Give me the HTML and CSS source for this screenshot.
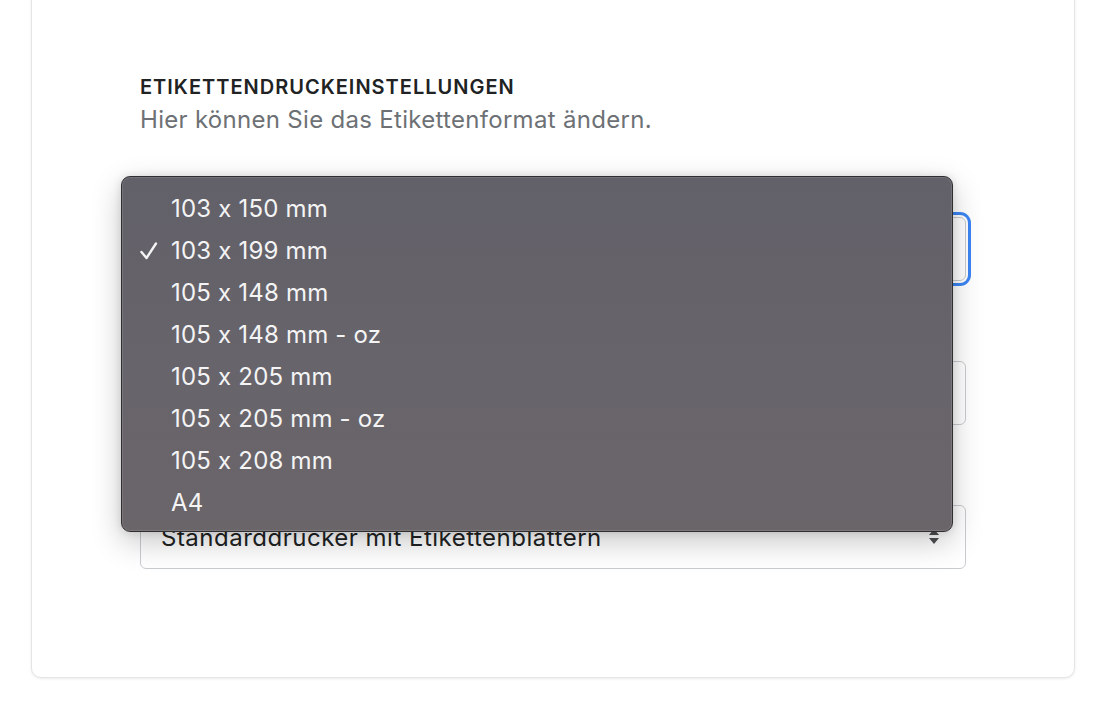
FILE: index.html
```html
<!DOCTYPE html>
<html lang="de">
<head>
    <meta charset="UTF-8">
    <meta name="viewport" content="width=device-width, initial-scale=1.0">
    <title>Etikettendruckeinstellungen</title>
    <link rel="stylesheet" href="styles.css">
</head>
<body>
    <div class="page">
        <section class="card">
            <div class="card-header">
                <h2 class="title">ETIKETTENDRUCKEINSTELLUNGEN</h2>
                <p class="subtitle">Hier können Sie das Etikettenformat ändern.</p>
            </div>
            <div class="fields">
                <div class="field field-open">
                    <div class="select is-focused" aria-label="Etikettenformat">
                        <span class="select-value"></span>
                        <svg class="select-arrows" width="12" height="18" viewBox="0 0 12 18"><path d="M6 1 L11 7 H1 Z M6 16 L11 10 H1 Z" fill="#4f4f52"/></svg>
                    </div>
                    <!-- geöffnete Liste -->
                    <ul class="menu">
                        <li class="menu-item">103 x 150 mm</li>
                        <li class="menu-item is-checked">
                            <svg class="check" width="20" height="18" viewBox="0 0 20 18"><path d="M2.5 10 L7.5 16 L17 1.5" fill="none" stroke="#f4f4f5" stroke-width="2.4" stroke-linecap="round" stroke-linejoin="round"/></svg>
                            103 x 199 mm
                        </li>
                        <li class="menu-item">105 x 148 mm</li>
                        <li class="menu-item">105 x 148 mm - oz</li>
                        <li class="menu-item">105 x 205 mm</li>
                        <li class="menu-item">105 x 205 mm - oz</li>
                        <li class="menu-item">105 x 208 mm</li>
                        <li class="menu-item">A4</li>
                    </ul>
                </div>
                <div class="field">
                    <div class="select" aria-label="Ausrichtung">
                        <span class="select-value"></span>
                        <svg class="select-arrows" width="12" height="18" viewBox="0 0 12 18"><path d="M6 1 L11 7 H1 Z M6 16 L11 10 H1 Z" fill="#4f4f52"/></svg>
                    </div>
                </div>
                <div class="field">
                    <div class="select" aria-label="Druckertyp">
                        <span class="select-value">Standarddrucker mit Etikettenblättern</span>
                        <svg class="select-arrows" width="12" height="18" viewBox="0 0 12 18"><path d="M6 1 L11 7 H1 Z M6 16 L11 10 H1 Z" fill="#4f4f52"/></svg>
                    </div>
                </div>
            </div>
        </section>
    </div>
</body>
</html>
```

FILE: styles.css
```css
/* Grundlayout */
body {
    margin: 0;
    padding: 0;
    background-color: #ffffff;
    font-family: 'Inter', 'Noto Sans', sans-serif;
    font-feature-settings: 'calt' 0; /* kein × zwischen Ziffern */
    color: #202223;
    overflow: hidden;
}

.page {
    padding: 0 33px 35px 31px;
}

/* Karte */
.card {
    margin-top: -20px;
    padding: 94px 108px 108px 108px;
    background-color: #ffffff;
    border: 1px solid #e4e5e7;
    border-radius: 10px;
    box-shadow: 0 1px 3px rgba(0, 0, 0, 0.08);
}

.title {
    margin: 0;
    font-size: 20px;
    line-height: 24px;
    font-weight: 600;
    letter-spacing: 1px;
    color: #202223;
}

.subtitle {
    margin: 6px 0 0 0;
    font-size: 24px;
    line-height: 30px;
    letter-spacing: 0.3px;
    color: #6d7175;
}

/* Felder */
.fields {
    display: flex;
    flex-direction: column;
    gap: 80px;
    margin-top: 82px;
}

.field-open {
    position: relative; /* für die geöffnete Liste */
}

.select {
    display: flex;
    align-items: center;
    justify-content: space-between;
    height: 64px;
    box-sizing: border-box;
    padding: 0 25px 0 20px;
    border: 1px solid #c9cccf;
    border-radius: 6px;
    background-color: #ffffff;
    font-size: 24px;
    letter-spacing: 0.5px;
}

.select.is-focused {
    box-shadow: 0 0 0 2px #ffffff, 0 0 0 5px #3b85f4;
}

.select-value {
    color: #202223;
}

/* Dropdown-Liste */
.menu {
    position: absolute;
    left: -19px;
    top: -41px;
    width: 832px;
    box-sizing: border-box;
    margin: 0;
    padding: 11px 0 7px 0;
    list-style: none;
    background: linear-gradient(180deg, #626068 0%, #67646b 55%, #6a6569 100%);
    border: 1px solid #2f2e31;
    border-radius: 9px;
    box-shadow: inset 0 0 0 1px rgba(255, 255, 255, 0.12), 0 10px 30px rgba(0, 0, 0, 0.22), 0 0 8px rgba(0, 0, 0, 0.12);
    z-index: 2;
}

.menu-item {
    position: relative;
    height: 42px;
    line-height: 42px;
    padding-left: 49px;
    font-size: 24px;
    letter-spacing: 0.2px;
    color: #f4f4f5;
}

.check {
    position: absolute;
    left: 17px;
    top: 12px;
}
```
